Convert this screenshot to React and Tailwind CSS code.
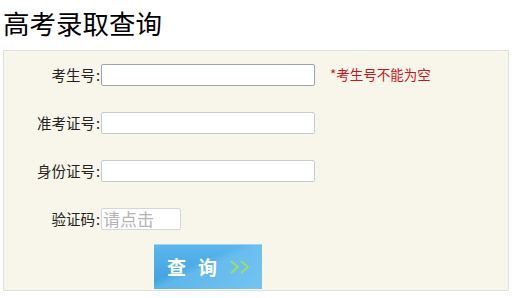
import React from 'react';

const Field = ({ label, children }) => (
  <div className="flex items-center h-[22px]">
    <label className="w-[97px] pr-[1px] text-right text-[14.5px] text-[#222] leading-none font-['Noto_Sans_CJK_SC',sans-serif]">
      {label}<span className="ml-[1px]">:</span>
    </label>
    {children}
  </div>
);

const App = () => {
  return (
    <div className="w-[515px] h-[298px] bg-white font-['Liberation_Sans','Noto_Sans_CJK_SC',sans-serif] overflow-hidden">
      <h1 className="h-[50px] pl-[3px] pt-[6px] text-[26.5px] leading-[34px] text-black font-['Noto_Sans_CJK_SC',serif] font-normal">
        高考录取查询
      </h1>
      <div className="ml-[3px] w-[506px] h-[241px] border border-[#e0e0dc] bg-[#f8f6eb] pt-[13px]">
        <div className="flex flex-col gap-[26px]">
          <Field label="考生号">
            <input className="w-[214px] h-[22px] border border-[#98a6b2] rounded-[2px] bg-white outline-none" />
            <span className="ml-[15px] text-[13.5px] text-[#c8161d] leading-none font-['Noto_Sans_CJK_SC',sans-serif]">*考生号不能为空</span>
          </Field>
          <Field label="准考证号">
            <input className="w-[214px] h-[22px] border border-[#c7ccd1] rounded-[2px] bg-white outline-none" />
          </Field>
          <Field label="身份证号">
            <input className="w-[214px] h-[22px] border border-[#c7ccd1] rounded-[2px] bg-white outline-none" />
          </Field>
          <Field label="验证码">
            <input
              placeholder="请点击"
              className="w-[80px] h-[22px] border border-[#d4d7da] rounded-[2px] bg-white outline-none px-[1px] text-[17px] font-['Noto_Sans_CJK_SC',sans-serif] placeholder:text-[#b4b4b4]"
            />
          </Field>
        </div>
        <div className="pl-[150px] mt-[14px]">
          <button className="relative w-[108px] h-[45px] overflow-hidden border-t border-[#9fd3f3] bg-gradient-to-b from-[#5cb6ec] to-[#3a9ede] flex items-center pl-[13px]">
            <span className="absolute inset-0 bg-gradient-to-br from-transparent from-40% via-[#7dcbf5]/50 to-[#8dd5f8]/70"></span>
            <span className="relative text-white text-[19px] font-bold font-['Noto_Sans_CJK_SC',sans-serif]">查</span>
            <span className="relative ml-[12px] text-white text-[19px] font-bold font-['Noto_Sans_CJK_SC',sans-serif]">询</span>
            <span className="relative ml-[12px] flex">
              <svg width="24" height="16" viewBox="0 0 24 16" fill="none" stroke="#a4dc5c" strokeWidth="1.8">
                <path d="M2 2l7 6-7 6" />
                <path d="M12 2l7 6-7 6" />
              </svg>
            </span>
          </button>
        </div>
      </div>
    </div>
  );
};

export default App;
